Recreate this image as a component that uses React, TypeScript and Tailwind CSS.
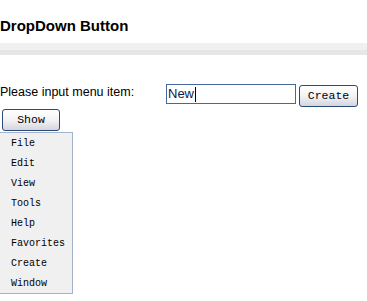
const MENU_ITEMS = ['File', 'Edit', 'View', 'Tools', 'Help', 'Favorites', 'Create', 'Window'];

const btn =
  'flex items-center justify-center rounded-[3px] border border-[#2a4a7a] bg-linear-to-b from-[#ffffff] via-[#f3f3f5] to-[#d4d5de] font-["Liberation_Mono",monospace] text-[11.5px] text-black';

export default function App() {
  return (
    <div className='w-[367px] h-[301px] bg-white overflow-hidden font-["Liberation_Sans",Arial,sans-serif] text-black'>
      <h1 className="pt-[17px] text-[15px] leading-[17px] font-bold">DropDown Button</h1>
      <div className="mt-[9px]">
        <div className="h-[7px] bg-[#f0f0f0]" />
        <div className="h-[5px] bg-[#e6e6e6]" />
      </div>

      <div className="mt-[29px] flex items-start">
        <label className="w-[166px] pt-[1px] text-[12.5px] leading-[15px]">Please input menu item:</label>
        <div className="flex h-[20px] w-[130px] items-center border border-[#46689a] bg-white pl-[1px] text-[13px] text-[#0a1a4a]">
          <span>New</span>
          <span className="ml-[1px] h-[15px] w-px bg-black" />
        </div>
        <button className={`${btn} ml-[3px] mt-[1px] h-[22px] w-[59px]`}>Create</button>
      </div>

      <button className={`${btn} ml-[2px] mt-[2px] h-[22px] w-[58px]`}>Show</button>

      <ul className="mt-[1px] w-[73px] border-y border-r border-[#a3b3cb] bg-[#f0f0f0]">
        {MENU_ITEMS.map((item) => (
          <li
            key={item}
            className='flex h-[20px] items-center pl-[11px] font-["Liberation_Mono",monospace] text-[10px] text-black'
          >
            {item}
          </li>
        ))}
      </ul>
    </div>
  );
}
